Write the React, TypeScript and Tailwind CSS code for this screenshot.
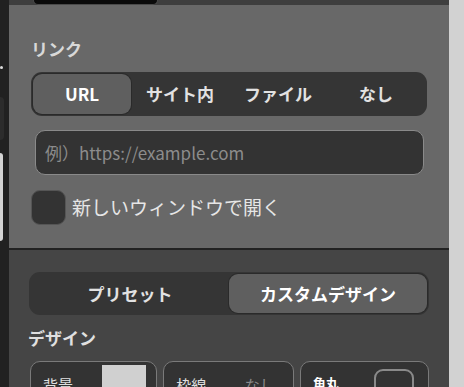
const jp = "font-['Noto_Sans_CJK_JP','Noto_Sans',sans-serif]";

const Segment = ({ items, active, h }: { items: string[]; active: number; h: string }) => (
  <div className={`flex rounded-[11px] bg-[#353535] p-[2px] ${h}`}>
    {items.map((t, i) => (
      <div
        key={t}
        className={`flex flex-1 items-center justify-center rounded-[9px] text-[17px] font-bold ${
          i === active ? "bg-[#5f5f5f] text-white shadow-[0_0_0_1px_#2a2a2a]" : "text-[#e2e2e2]"
        }`}
      >
        {t}
      </div>
    ))}
  </div>
);

export default function App() {
  return (
    <div className={`flex h-[387px] w-[464px] overflow-hidden ${jp}`}>
      {/* left strip */}
      <div className="flex w-[9px] flex-col bg-[#212121]">
        <div className="mt-[66px] h-[3px] w-[3px] rounded-full bg-[#dcdcdc]" />
        <div className="mt-[28px] h-[43px] w-[4px] rounded-r-[4px] bg-[#2c2c2c]" />
        <div className="mt-[13px] h-[88px] w-[3px] rounded-r-[3px] bg-[#d4d4d4]" />
      </div>

      {/* main panel */}
      <div className="flex w-[440px] flex-col">
        <div className="h-[14px] bg-[#3e3e3e]">
          <div className="ml-[24px] h-[5px] w-[125px] rounded-b-[10px] border-x border-b border-[#4a4a4a] bg-[#0a0a0a]" />
        </div>

        <div className="flex flex-col border-b-2 border-[#222] bg-[#686868] px-[22px] pb-[23px] pt-[32px]">
          <div className="text-[17px] font-bold leading-6 text-[#d8d8d8]">リンク</div>
          <div className="mt-[11px]">
            <Segment items={["URL", "サイト内", "ファイル", "なし"]} active={0} h="h-[44px]" />
          </div>
          <div className="ml-[4px] mr-[3px] mt-[14px] flex h-[45px] items-center rounded-[10px] border border-[#8a8a8a] bg-[#333333] px-[9px] text-[17px] text-[#8c8c8c]">
            例）https://example.com
          </div>
          <div className="mt-[15px] flex items-center gap-[6px]">
            <div className="h-[35px] w-[35px] rounded-[9px] border border-[#555] bg-[#333333]" />
            <span className="text-[19px] text-[#e6e6e6]">新しいウィンドウで開く</span>
          </div>
        </div>

        <div className="flex flex-1 flex-col bg-[#454545] px-[20px] pt-[22px]">
          <Segment items={["プリセット", "カスタムデザイン"]} active={1} h="h-[43px]" />
          <div className="ml-[-1px] mt-[11px] text-[17px] font-bold leading-6 text-[#e0e0e0]">デザイン</div>
          <div className="ml-[1px] mt-[11px] flex gap-[6px]">
            <div className="flex h-[44px] w-[128px] gap-[8px] rounded-[10px] border border-[#7a7a7a] bg-[#333333] pl-[12px] pr-[10px] pt-[3px]">
              <span className="mt-[9px] text-[15px] text-[#e0e0e0]">背景</span>
              <div className="ml-auto h-[40px] w-[44px] bg-[#d0d0d0]" />
            </div>
            <div className="flex h-[44px] w-[131px] rounded-[10px] border border-[#7a7a7a] bg-[#333333] pl-[12px] pr-[18px] pt-[12px]">
              <span className="text-[15px] text-[#e0e0e0]">枠線</span>
              <span className="ml-auto text-[15px] text-[#8a8a8a]">なし</span>
            </div>
            <div className="flex h-[44px] w-[130px] rounded-[10px] border border-[#7a7a7a] bg-[#333333] pl-[12px] pr-[14px] pt-[7px]">
              <span className="mt-[4px] text-[13px] font-bold text-white">角丸</span>
              <div className="ml-auto h-[36px] w-[40px] rounded-[9px] border-2 border-[#8a8a8a]" />
            </div>
          </div>
        </div>
      </div>

      {/* right strip */}
      <div className="flex-1 bg-[#d2d2d2]" />
    </div>
  );
}
